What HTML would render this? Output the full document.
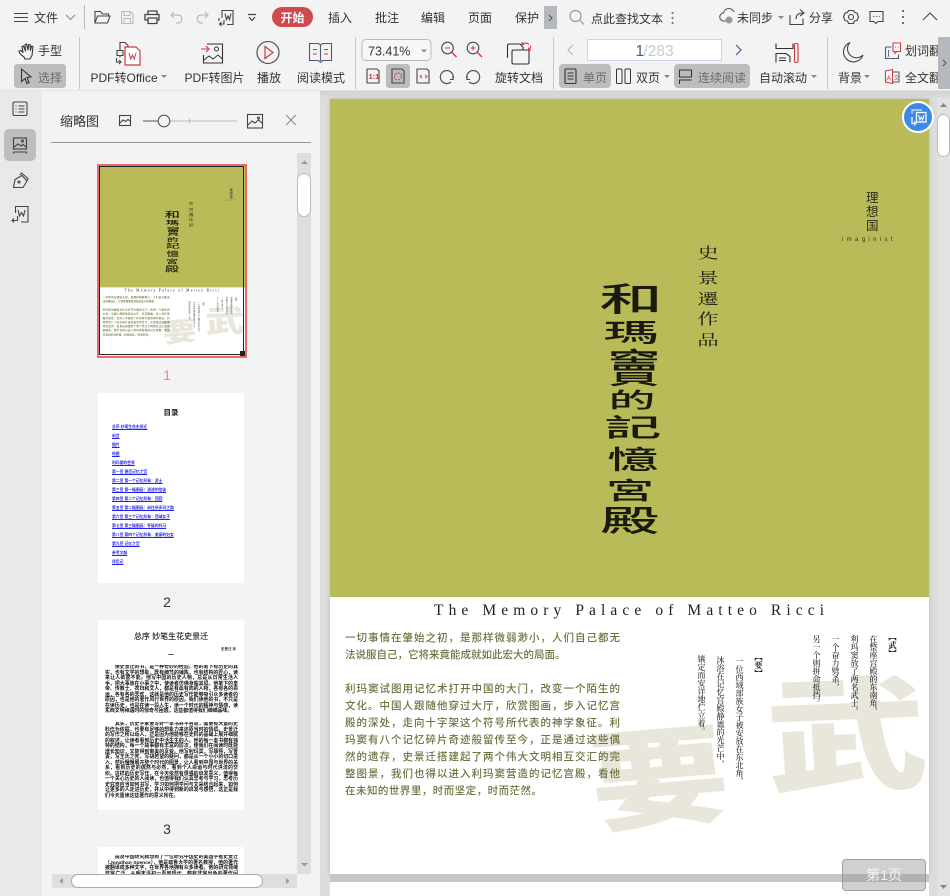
<!DOCTYPE html>
<html lang="zh"><head><meta charset="utf-8"><title>PDF</title>
<style>
html,body{margin:0;padding:0;width:950px;height:896px;overflow:hidden;background:#f3f3f3;font-family:"Liberation Sans","Noto Sans CJK SC",sans-serif}
.a{position:absolute}
#viewer{left:320px;top:91px;width:630px;height:805px;background:#dcdcdc;overflow:hidden}
.page{position:absolute;left:0;top:0;width:599px;height:775px;background:#fff;overflow:hidden}
.olive{position:absolute;left:0;top:0;width:599px;height:498px;background:#b9bb58}
.c{position:absolute;line-height:1;white-space:nowrap;color:#1a1a10}
.big{font-family:"Noto Sans CJK TC",sans-serif;font-weight:500;font-size:60px}
.au{font-family:"Noto Serif CJK TC",serif;font-size:19px;font-weight:400;transform:translate(-50%,-50%) scale(1.12,.78)}
.ln{position:absolute;left:15px;width:275px;height:14px;line-height:14px;font-size:10.5px;color:#6e7240;text-align:justify;text-align-last:justify;white-space:nowrap;filter:blur(.25px);font-weight:500}
.v{position:absolute;writing-mode:vertical-rl;font-family:"Noto Serif CJK SC",serif;font-size:8px;line-height:8px;letter-spacing:0;color:#222;white-space:nowrap;font-weight:500}
.wm{position:absolute;line-height:1;color:#e9e7db;font-family:"Noto Sans CJK SC",sans-serif;font-weight:900}
.th{position:absolute;background:#fff;overflow:hidden}
.toc{position:absolute;left:14px;font-size:3.8px;line-height:5px;color:#2222ee;font-weight:700;text-decoration:underline;white-space:nowrap}
.p3{position:absolute;left:7px;width:133px;font-size:4.9px;line-height:5.5px;color:#111;font-weight:700;text-align:justify;word-break:break-all;overflow:hidden}
.num{position:absolute;width:40px;text-align:center;font-size:14px;line-height:16px;color:#333}
</style></head>
<body>

<!-- viewer -->
<div class="a" id="viewer">
  <div class="a" style="left:0;top:0;width:630px;height:7px;background:linear-gradient(#d3d3d3,#dcdcdc)"></div>
  <div class="page" style="left:10px;top:8px;box-shadow:0 0 4px #bbb">
    <div class="olive"></div>
    <span class="c big" style="left:301px;top:198px;transform:translate(-50%,-50%) scale(1.05,.55)">和</span>
    <span class="c big" style="left:301px;top:232px;transform:translate(-50%,-50%) scale(.92,.42)">瑪</span>
    <span class="c big" style="left:304px;top:267px;transform:translate(-50%,-50%) scale(.88,.66)">竇</span>
    <span class="c big" style="left:302px;top:300px;transform:translate(-50%,-50%) scale(.78,.36)">的</span>
    <span class="c big" style="left:303px;top:327px;transform:translate(-50%,-50%) scale(.95,.42)">記</span>
    <span class="c big" style="left:303px;top:359px;transform:translate(-50%,-50%) scale(.86,.44)">憶</span>
    <span class="c big" style="left:300px;top:390px;transform:translate(-50%,-50%) scale(.8,.4)">宮</span>
    <span class="c big" style="left:300px;top:420px;transform:translate(-50%,-50%) scale(.98,.5)">殿</span>

    <span class="c au" style="left:378px;top:153px">史</span>
    <span class="c au" style="left:378px;top:178px">景</span>
    <span class="c au" style="left:378px;top:199px">遷</span>
    <span class="c au" style="left:378px;top:219px">作</span>
    <span class="c au" style="left:378px;top:240px">品</span>

    <span class="c" style="left:536px;top:93px;font-size:12.5px;color:#2c2c20">理</span>
    <span class="c" style="left:536px;top:107px;font-size:12.5px;color:#2c2c20">想</span>
    <span class="c" style="left:536px;top:121px;font-size:12.5px;color:#2c2c20">国</span>
    <span class="c" style="left:512px;top:138px;font-size:6px;letter-spacing:3.35px;color:#333">imaginist</span>

    <span class="wm" style="left:516px;top:628px;font-size:170px;transform:translate(-50%,-50%) scale(.95,.72) rotate(-3deg)">武</span>
    <span class="wm" style="left:328px;top:672px;font-size:138px;transform:translate(-50%,-50%) scale(1,.78) rotate(-6deg)">要</span>

    <span class="c" style="left:104px;top:504px;font-family:'Liberation Serif',serif;font-size:15.5px;letter-spacing:5.1px;color:#222">The Memory Palace of Matteo Ricci</span>

    <div class="ln" style="top:532px">一切事情在肇始之初，是那样微弱渺小，人们自己都无</div>
    <div class="ln" style="top:549px;width:205px">法说服自己，它将来竟能成就如此宏大的局面。</div>
    <div class="ln" style="top:583px">利玛窦试图用记忆术打开中国的大门，改变一个陌生的</div>
    <div class="ln" style="top:600px">文化。中国人跟随他穿过大厅，欣赏图画，步入记忆宫</div>
    <div class="ln" style="top:617px">殿的深处，走向十字架这个符号所代表的神学象征。利</div>
    <div class="ln" style="top:634px">玛窦有八个记忆碎片奇迹般留传至今，正是通过这些偶</div>
    <div class="ln" style="top:651px">然的遗存，史景迁搭建起了两个伟大文明相互交汇的完</div>
    <div class="ln" style="top:668px">整图景，我们也得以进入利玛窦营造的记忆宫殿，看他</div>
    <div class="ln" style="top:685px;width:197px">在未知的世界里，时而坚定，时而茫然。</div>

    <div class="v" style="left:558px;top:534px;font-weight:700">【武】</div>
    <div class="v" style="left:539px;top:536px">在整座宫殿的东南角，</div>
    <div class="v" style="left:520px;top:536px">利玛窦放了两名武士，</div>
    <div class="v" style="left:501px;top:536px">一个奋力劈杀，</div>
    <div class="v" style="left:482px;top:536px">另一个则拼命抵挡。</div>
    <div class="v" style="left:424px;top:554px;font-weight:700">【要】</div>
    <div class="v" style="left:405px;top:558px">一位西域部族女子被安放在东北角，</div>
    <div class="v" style="left:386px;top:557px">沐浴在记忆宫殿静谧的光芒中，</div>
    <div class="v" style="left:367px;top:556px">镇定而安详地伫立着。</div>
  </div>
  <div class="a" style="left:10px;top:783px;width:599px;height:8px;background:#c6c6c6"></div>
  <div class="a" style="left:10px;top:791px;width:599px;height:20px;background:#fff"></div>
  <!-- main scrollbar -->
  <div class="a" style="left:617px;top:7px;width:13px;height:798px;background:#e2e2e2"></div>
  <div class="a" style="left:617px;top:23px;width:13px;height:43px;box-sizing:border-box;background:#fff;border:1px solid #bbb;border-radius:7px"></div>
</div>
<svg class="a" style="left:937px;top:98px" width="13" height="798"><path d="M3 9l3.5-4 3.5 4z" fill="#888"/><path d="M3 787l3.500 4 3.500-4z" fill="#888"/></svg>

<!-- float buttons -->
<svg class="a" style="left:902px;top:101px" width="32" height="32">
  <circle cx="16" cy="16" r="15" fill="#3f88e6" stroke="#fff" stroke-width="2"/>
  <path d="M10 12.500v-3.500h10" fill="none" stroke="#dbe8fb" stroke-width="1.200"/>
  <rect x="14.500" y="11.500" width="9.500" height="9.500" fill="none" stroke="#fff" stroke-width="1.300"/>
  <path d="M16.500 14l1.500 5 1.300-3 1.300 3 1.500-5" fill="none" stroke="#fff" stroke-width="1"/>
  <path d="M10 16v6.500h4M12 20.500l2 2-2 2" fill="none" stroke="#fff" stroke-width="1.200"/>
</svg>
<div class="a" style="left:842px;top:859px;width:82px;height:30px;background:rgba(150,150,150,.45);border:1px solid rgba(130,130,130,.6);border-radius:4px;color:#f4f4f4;font-size:14px;line-height:30px;text-align:center">第1页</div>

<!-- left rail and panel -->
<div class="a" style="left:0;top:91px;width:42px;height:805px;background:#e9e9e9"></div>
<div class="a" style="left:42px;top:91px;width:278px;height:805px;background:#f3f3f3;overflow:hidden"></div>

<!-- thumb 1 -->
<div class="a" style="left:97px;top:164px;width:146px;height:190px;border:2px solid #e86a6a;overflow:hidden">
  <div class="a" style="left:0;top:0;width:146px;height:190px;overflow:hidden">
    <div class="page" style="transform:scale(.2437);transform-origin:0 0">
      <div class="olive"></div>
      <span class="c big" style="left:301px;top:198px;transform:translate(-50%,-50%) scale(1.05,.55)">和</span>
      <span class="c big" style="left:301px;top:232px;transform:translate(-50%,-50%) scale(.92,.42)">瑪</span>
      <span class="c big" style="left:304px;top:267px;transform:translate(-50%,-50%) scale(.88,.66)">竇</span>
      <span class="c big" style="left:302px;top:300px;transform:translate(-50%,-50%) scale(.78,.36)">的</span>
      <span class="c big" style="left:303px;top:327px;transform:translate(-50%,-50%) scale(.95,.42)">記</span>
      <span class="c big" style="left:303px;top:359px;transform:translate(-50%,-50%) scale(.86,.44)">憶</span>
      <span class="c big" style="left:300px;top:390px;transform:translate(-50%,-50%) scale(.8,.4)">宮</span>
      <span class="c big" style="left:300px;top:420px;transform:translate(-50%,-50%) scale(.98,.5)">殿</span>
      <span class="c au" style="left:378px;top:153px">史</span>
      <span class="c au" style="left:378px;top:178px">景</span>
      <span class="c au" style="left:378px;top:199px">遷</span>
      <span class="c au" style="left:378px;top:219px">作</span>
      <span class="c au" style="left:378px;top:240px">品</span>
      <span class="c" style="left:536px;top:93px;font-size:12.5px;color:#2c2c20">理</span>
      <span class="c" style="left:536px;top:107px;font-size:12.5px;color:#2c2c20">想</span>
      <span class="c" style="left:536px;top:121px;font-size:12.5px;color:#2c2c20">国</span>
      <span class="c" style="left:512px;top:138px;font-size:6px;letter-spacing:3.35px;color:#333">imaginist</span>
      <span class="wm" style="left:516px;top:628px;font-size:170px;transform:translate(-50%,-50%) scale(.95,.72) rotate(-3deg)">武</span>
      <span class="wm" style="left:328px;top:672px;font-size:138px;transform:translate(-50%,-50%) scale(1,.78) rotate(-6deg)">要</span>
      <span class="c" style="left:104px;top:504px;font-family:'Liberation Serif',serif;font-size:15.5px;letter-spacing:5.1px;color:#222">The Memory Palace of Matteo Ricci</span>
      <div class="ln" style="top:532px">一切事情在肇始之初，是那样微弱渺小，人们自己都无</div>
      <div class="ln" style="top:549px;width:205px">法说服自己，它将来竟能成就如此宏大的局面。</div>
      <div class="ln" style="top:583px">利玛窦试图用记忆术打开中国的大门，改变一个陌生的</div>
      <div class="ln" style="top:600px">文化。中国人跟随他穿过大厅，欣赏图画，步入记忆宫</div>
      <div class="ln" style="top:617px">殿的深处，走向十字架这个符号所代表的神学象征。利</div>
      <div class="ln" style="top:634px">玛窦有八个记忆碎片奇迹般留传至今，正是通过这些偶</div>
      <div class="ln" style="top:651px">然的遗存，史景迁搭建起了两个伟大文明相互交汇的完</div>
      <div class="ln" style="top:668px">整图景，我们也得以进入利玛窦营造的记忆宫殿，看他</div>
      <div class="ln" style="top:685px;width:197px">在未知的世界里，时而坚定，时而茫然。</div>
      <div class="v" style="left:558px;top:534px;font-weight:700">【武】</div>
      <div class="v" style="left:539px;top:536px">在整座宫殿的东南角，</div>
      <div class="v" style="left:520px;top:536px">利玛窦放了两名武士，</div>
      <div class="v" style="left:501px;top:536px">一个奋力劈杀，</div>
      <div class="v" style="left:482px;top:536px">另一个则拼命抵挡。</div>
      <div class="v" style="left:424px;top:554px;font-weight:700">【要】</div>
      <div class="v" style="left:405px;top:558px">一位西域部族女子被安放在东北角，</div>
      <div class="v" style="left:386px;top:557px">沐浴在记忆宫殿静谧的光芒中，</div>
      <div class="v" style="left:367px;top:556px">镇定而安详地伫立着。</div>
    </div>
  </div>
  <div class="a" style="left:0;top:0;width:143px;height:187px;border:1.5px solid #222"></div>
  <div class="a" style="right:0;bottom:0;width:5px;height:5px;background:#222"></div>
</div>
<div class="num" style="left:147px;top:367px;color:#e87ab8">1</div>

<!-- thumb 2 -->
<div class="th" style="left:98px;top:393px;width:146px;height:190px">
  <div class="a" style="left:0;width:146px;text-align:center;top:15px;font-size:7.5px;line-height:10px;font-weight:700;color:#222">目录</div>
  <div class="toc" style="top:32px">总序 妙笔生花史景迁</div>
  <div class="toc" style="top:41px">前言</div>
  <div class="toc" style="top:50px">图片</div>
  <div class="toc" style="top:59px">地图</div>
  <div class="toc" style="top:68px">利玛窦的世界</div>
  <div class="toc" style="top:77px">第一章 建造记忆之宫</div>
  <div class="toc" style="top:86px">第二章 第一个记忆形象：武士</div>
  <div class="toc" style="top:95px">第三章 第一幅图画：迷途的信徒</div>
  <div class="toc" style="top:104px">第四章 第二个记忆形象：回回</div>
  <div class="toc" style="top:113px">第五章 第二幅图画：前往所多玛之路</div>
  <div class="toc" style="top:122px">第六章 第三个记忆形象：西域女子</div>
  <div class="toc" style="top:131px">第七章 第三幅图画：怀疑的托马</div>
  <div class="toc" style="top:140px">第八章 第四个记忆形象：美丽的妇女</div>
  <div class="toc" style="top:149px">第九章 记忆之宫</div>
  <div class="toc" style="top:158px">参考文献</div>
  <div class="toc" style="top:167px">译后记</div>
</div>
<div class="num" style="left:147px;top:594px">2</div>

<!-- thumb 3 -->
<div class="th" style="left:98px;top:620px;width:146px;height:190px">
  <div class="a" style="left:0;width:146px;text-align:center;top:12px;font-size:8px;line-height:10px;color:#222;font-weight:500">总序 妙笔生花史景迁</div>
  <div class="a" style="left:123px;top:27px;font-size:3.5px;line-height:5px;color:#333;font-weight:700">史景迁 序</div>
  <div class="a" style="left:0;width:146px;text-align:center;top:32px;font-size:6px;line-height:8px;font-weight:700;color:#222">一</div>
  <div class="p3" style="top:45px;height:55px">　　读史景迁的书，是一种奇妙的经验。他的笔下有历史的真实，也有文学的想象，既有细节的铺陈，也有结构的匠心，读来让人欲罢不能。他写中国的历史人物，总是从日常生活入手，把大事放在小事之中，使读者仿佛身临其境。他笔下的皇帝、传教士、农妇和文人，都是有血有肉的人物，各有各的命运，各有各的悲欢，这就是他的历史写作能够吸引众多读者的原因，也是他的著作风行世界的原因。我们读他的书，不只是在读历史，也是在读一段人生，读一个时代的精神与情感，读东西文明相遇时的惊奇与困惑，这些都值得我们细细品味。</div>
  <div class="p3" style="top:102px;height:83px">　　其实，历史学家要写好一本书并不容易，需要有大量的史料作为依据，也要有足够的想象力来还原当时的情境。史景迁的写作之所以动人，正是因为他能够在史料的基础上展开细腻的叙述，让读者看到历史中活生生的人。他的每一本书都有独特的结构，每一个故事都有丰富的层次，使我们在阅读时既能增长知识，又能得到审美的享受。他写利玛窦，写康熙，写曹寅，写王氏之死，写胡若望的疑问，都是从一个小小的切口进入，然后慢慢展开整个时代的图景，让人看到中国与世界的关系，看到历史的偶然与必然，看到个人命运与时代洪流的交织。这样的历史写作，在今天依然有很强的启发意义，值得每一个关心历史的人阅读，也值得我们认真思考与学习，思考历史究竟应当如何书写，学习如何把学问与文采结合起来，如何让更多的人走进历史，并从中得到新的启发与感悟，这正是我们今天重读这些著作的意义所在。</div>
</div>
<div class="num" style="left:147px;top:821px">3</div>

<!-- thumb 4 -->
<div class="th" style="left:98px;top:847px;width:146px;height:40px">
  <div class="p3" style="top:8px;height:30px">　　提及中国研究就想到了一位研究中国史的美国学者史景迁（Jonathan Spence），他是耶鲁大学的著名教授，他的著作被翻译成多种文字，在世界各地拥有众多读者。他的研究领域非常广泛，从明末清初一直到现代，都有非常出色的著作问世，影响深远。</div>
</div>

<!-- panel chrome + ribbon icons in one SVG -->
<svg class="a" style="left:0;top:0" width="950" height="896" font-family="'Liberation Sans','Noto Sans CJK SC',sans-serif" font-size="12" fill="#333">
  <!-- ribbon bg -->
  <rect x="0" y="0" width="950" height="91" fill="#f3f3f3"/>
  <rect x="0" y="90" width="950" height="1" fill="#e2e2e2"/>
  <g fill="none" stroke="#c9c9c9"><path d="M79.500 37v52M355.500 37v52M553.500 37v52M827.500 37v52"/><path d="M84.500 5v24" stroke="#bbb"/></g>

  <!-- top row -->
  <g fill="none" stroke="#444" stroke-width="1.100">
    <path d="M14 13.500h14M14 17.500h14M14 21.500h14"/>
    <path d="M66 15l4.500 4.500L75 15" stroke="#888"/>
    <path d="M95 23V11.500h5.500l2 2.500h6v2M95 23l2.500-7H110l-2.500 7z"/>
    <path d="M121.500 11.500h9l2.500 2.500v9.500h-11.500zM124 11.500v4h6v-4M124 23.500v-5h6.500v5" stroke="#bbb"/>
    <path d="M148 15v-4h9v4M147.500 20h-2.500v-5.500h14V20h-2.500M148 18h9v5.500h-9z" stroke-width="1.300"/>
    <path d="M174 12l-3 3 3 3M171 15h7c5 0 5 8 0 8h-2" stroke="#bbb" stroke-width="1.200"/>
    <path d="M205 12l3 3-3 3M208 15h-7c-5 0-5 8 0 8h2" stroke="#bbb" stroke-width="1.200"/>
    <path d="M222 18v-7.500h11v14h-6M225 13.500l1.500 6 1.500-3.500 1.500 3.500 1.500-6"/>
    <path d="M224 20v4h-4M221.500 22l-2 2 2 2M219 18v3"/>
    <path d="M248 14.500h8M249 17l3 3.500 3-3.500" stroke-width="1.200"/>
  </g>
  <text x="34" y="22">文件</text>
  <rect x="272" y="7" width="41" height="20" rx="10" fill="#cf4a50"/>
  <text x="280.500" y="22" fill="#fff" font-weight="700">开始</text>
  <text x="328" y="22">插入</text><text x="375" y="22">批注</text><text x="421" y="22">编辑</text><text x="468" y="22">页面</text><text x="515" y="22">保护</text>
  <rect x="544" y="6" width="13" height="23" fill="#b5b8bd"/>
  <path d="M549 15l3 3-3 3" fill="none" stroke="#555"/>
  <circle cx="575.500" cy="16" r="5.500" fill="none" stroke="#999" stroke-width="1.200"/><path d="M580 20.500l4 4" stroke="#999" stroke-width="1.200"/>
  <text x="591" y="23">点此查找文本</text>
  <g fill="#666"><circle cx="672.500" cy="13" r="1"/><circle cx="672.500" cy="18" r="1"/><circle cx="672.500" cy="23" r="1"/></g>
  <path d="M727 21h-3a4 4 0 0 1-.500-8 5.500 5.500 0 0 1 10.500-1" fill="none" stroke="#555" stroke-width="1.100"/>
  <circle cx="729" cy="20" r="3.500" fill="#999"/>
  <text x="737" y="22">未同步</text><path d="M778 16h6l-3 3z" fill="#888"/>
  <path d="M790 15v9.500h13v-6M796 19c0-4 2-6 7-6M800 9.500l4 3.500-4 3" fill="none" stroke="#444" stroke-width="1.100"/>
  <text x="809" y="22">分享</text>
  <path d="M848.500 10.500h5l1 2 2.500.500 1.500 4-1.500 3.500-2.500.500-1 2.500h-5l-1-2.500-2.500-.500-1.500-3.500 1.500-4 2.500-.500z" fill="none" stroke="#444" stroke-width="1.100" stroke-linejoin="round"/><circle cx="851" cy="17" r="2.500" fill="none" stroke="#444" stroke-width="1.100"/>
  <path d="M870 11.500h13v10h-5l-2 2-2-2h-4z" fill="none" stroke="#444" stroke-width="1.100"/><path d="M873 16.500h7" stroke="#777" stroke-dasharray="1.500 1.500"/>
  <g fill="#444"><circle cx="903" cy="11" r="1"/><circle cx="903" cy="17" r="1"/><circle cx="903" cy="23" r="1"/></g>
  <path d="M923 20l7-7 7 7" fill="none" stroke="#444" stroke-width="1.100"/>

  <!-- ribbon: hand / select -->
  <path d="M24 57c-3-2-5-4-5-6l2-.500 2 2-1-6 1.500-.500 2 5-.500-6.500 1.500-.500 1.500 6 .500-5.500 1.500 0 .500 6 1-4.500 1.500.500-1 9-2 3.500h-5z" fill="none" stroke="#333" stroke-width="1.100" stroke-linejoin="round"/>
  <text x="38" y="55">手型</text>
  <rect x="14" y="64" width="52" height="24" rx="3" fill="#bdbdbd"/>
  <path d="M21.500 69l9.500 8-4 .500 2 5-2 1-2-5-3.500 3z" fill="none" stroke="#333" stroke-width="1.100"/>
  <text x="38" y="82" fill="#6b6b6b">选择</text>

  <!-- PDF to Office -->
  <g fill="none" stroke="#444" stroke-width="1.100">
    <path d="M120 51v-8.500h5l3 3v5M117 50.500h6v5h-6zM120 55.500v2M116.500 58v4h4M119 60l2 2-2 2"/>
  </g>
  <path d="M125 47h11l4 4v14h-15z" fill="#fff" stroke="#d0393f" stroke-width="1.200"/>
  <path d="M129 53l1.800 6 1.700-4 1.700 4 1.800-6" fill="none" stroke="#d0393f" stroke-width="1"/>
  <text x="90.500" y="82">PDF转Office</text><path d="M161 75h6l-3 3z" fill="#888"/>

  <!-- PDF to image -->
  <path d="M207 44h15.500v19h-19v-8" fill="none" stroke="#333" stroke-width="1.100"/>
  <circle cx="216.500" cy="49" r="2" fill="none" stroke="#333"/>
  <path d="M204 60l5-4 4 3 5-4 4.500 4" fill="none" stroke="#333"/>
  <path d="M201 49h8M206 46l3 3-3 3" fill="none" stroke="#d0393f" stroke-width="1.100"/>
  <text x="184.500" y="82">PDF转图片</text>

  <!-- Play -->
  <circle cx="268" cy="52.500" r="11" fill="none" stroke="#444" stroke-width="1.100"/>
  <path d="M265 46.500l8 6-8 6z" fill="none" stroke="#d0393f" stroke-width="1.200"/>
  <text x="257" y="82">播放</text>

  <!-- Read mode -->
  <path d="M320.500 45l-2-1.500h-9v17h9l2 2 2-2h9v-17h-9z M320.500 45v16" fill="none" stroke="#4c5a78" stroke-width="1.100"/>
  <path d="M313 49.500h4M313 54h4M324 49.500h4M324 54h4" stroke="#d0393f"/>
  <text x="297" y="82">阅读模式</text>

  <!-- zoom -->
  <rect x="362" y="39.500" width="69" height="21" rx="4" fill="#f7f7f7" stroke="#bbb"/>
  <text x="368" y="55.500" font-size="12.500">73.41%</text><path d="M421 49.500h6l-3 3z" fill="#888"/>
  <circle cx="447.500" cy="48" r="5.800" fill="none" stroke="#444" stroke-width="1.100"/><path d="M445 48h5" stroke="#d0393f"/><path d="M452 52.500l4.500 4.500" stroke="#d0393f" stroke-width="1.300"/>
  <circle cx="473" cy="48" r="5.800" fill="none" stroke="#444" stroke-width="1.100"/><path d="M470.500 48h5M473 45.500v5" stroke="#d0393f"/><path d="M477.500 52.500l4.500 4.500" stroke="#d0393f" stroke-width="1.300"/>

  <path d="M367 69h10l2 2v12h-12z" fill="none" stroke="#444" stroke-width="1.100"/><text x="368.500" y="79" font-size="7.500" fill="#c0353b" font-weight="700">1:1</text>
  <rect x="386" y="64" width="24" height="24" rx="3" fill="#bdbdbd"/>
  <path d="M392 69h10l2 2v12h-12z" fill="none" stroke="#444" stroke-width="1.100"/><circle cx="398" cy="76.500" r="3.500" fill="none" stroke="#d0393f" stroke-dasharray="2 1.200"/>
  <path d="M417 69h10l2 2v12h-12z" fill="none" stroke="#444" stroke-width="1.100"/><path d="M422 75l-2 1.500 2 1.500M425 75l2 1.500-2 1.500" fill="none" stroke="#d0393f"/>
  <path d="M451 82a6.500 6.500 0 1 1 2-3M453 76v3.500h-3" fill="none" stroke="#444" stroke-width="1.100"/>
  <path d="M469 82a6.500 6.500 0 1 0-2-3M467 76v3.500h3" fill="none" stroke="#444" stroke-width="1.100"/>

  <!-- rotate doc -->
  <path d="M507.500 58v-12.500a1.500 1.500 0 0 1 1.500-1.500h11l3 3v3" fill="none" stroke="#333" stroke-width="1.100"/>
  <rect x="512" y="50" width="17" height="14" rx="1.500" fill="#f3f3f3" stroke="#333" stroke-width="1.100"/>
  <path d="M522 44.500c1.500-2 5-2 7 0M522 42v2.500h2.500M530.500 45.500c.5 1.500 0 3-1.500 4M531 50h-2.500v-2.500" fill="none" stroke="#d0393f"/>
  <text x="495" y="82">旋转文档</text>

  <!-- page nav -->
  <path d="M573 45l-5 5 5 5" fill="none" stroke="#bbb" stroke-width="1.200"/>
  <rect x="587.500" y="39.500" width="134" height="21" fill="#fff" stroke="#ccd6e8"/>
  <text x="635.500" y="56" font-size="15.500" fill="#4b5c85">1</text><text x="643.500" y="56" font-size="15.500" fill="#c9c9c9">/283</text>
  <path d="M736 45l5 5-5 5" fill="none" stroke="#4b5c85" stroke-width="1.200"/>
  <rect x="559" y="64" width="52" height="24" rx="4" fill="#bdbdbd"/>
  <rect x="565" y="69" width="11" height="14.500" rx="1" fill="none" stroke="#333" stroke-width="1.100"/><path d="M567.500 73h6M567.500 76h6M567.500 79h6" stroke="#333"/>
  <text x="583" y="82" fill="#6b6b6b">单页</text>
  <rect x="616.500" y="69" width="5.500" height="14.500" rx="1" fill="none" stroke="#333"/><rect x="625" y="69" width="5.500" height="14.500" rx="1" fill="none" stroke="#333"/>
  <text x="636" y="82">双页</text><path d="M664 75h6l-3 3z" fill="#888"/>
  <rect x="674" y="64" width="76" height="24" rx="4" fill="#bdbdbd"/>
  <path d="M679.500 70h12v7h-12zM679.500 84v-4h12" fill="none" stroke="#333" stroke-width="1.100"/>
  <text x="698" y="82" fill="#6b6b6b">连续阅读</text>

  <!-- auto scroll -->
  <path d="M776 43.500v5h17v-5M776 62.500v-9h10l4 3v6M779 58h7M779 60.500h7" fill="none" stroke="#333" stroke-width="1.100"/>
  <rect x="794.500" y="43.500" width="3.500" height="19" rx="1.500" fill="none" stroke="#d0393f" stroke-width="1.100"/>
  <text x="759" y="82">自动滚动</text><path d="M811 75h6l-3 3z" fill="#888"/>

  <!-- bg -->
  <path d="M850 42.500a10 10 0 1 0 13 12.500 9 9 0 0 1-13-12.500z" fill="none" stroke="#444" stroke-width="1.100"/>
  <text x="838" y="82">背景</text><path d="M864 75h6l-3 3z" fill="#888"/>
  <path d="M885.500 47h6M885.500 47v11.500h13v-4" fill="none" stroke="#4c5a78" stroke-width="1.100"/>
  <text x="887" y="56.500" font-size="9" fill="#4c5a78" font-family="'Liberation Serif',serif">I</text>
  <path d="M893 43h7.500v8.500h-3.500l-2 1.800v-1.800h-2z" fill="#fff" stroke="#d0393f" stroke-width="1.100"/><path d="M895 47h1M897.500 47h1" stroke="#d0393f"/>
  <text x="905" y="55">划词翻</text>
  <path d="M885.500 71l7-1.500v14l-7-1.500z" fill="#fff" stroke="#d0393f" stroke-width="1.100"/><text x="886.500" y="80.500" font-size="7" fill="#d0393f">A</text>
  <path d="M892.500 72h6.500v10h-6.500" fill="none" stroke="#4c5a78"/><text x="893.500" y="80" font-size="6" fill="#777">文</text>
  <text x="905" y="82">全文翻</text>
  <rect x="938" y="37" width="12" height="52" fill="#b5b8bd"/>
  <path d="M943 60l3 3-3 3" fill="none" stroke="#555"/>

  <!-- rail icons -->
  <rect x="4" y="129" width="32" height="32" rx="5" fill="#bdbdbd"/>
  <g fill="none" stroke="#444" stroke-width="1.100">
    <rect x="13" y="102" width="14" height="13.500" rx="1.500"/><path d="M15.500 106h1M15.500 109h1M15.500 112h1M18.500 106h6M18.500 109h6M18.500 112h6"/>
    <rect x="13.500" y="138" width="13" height="11"/><circle cx="22.500" cy="141" r="1"/><path d="M14 147l4-3 3 2 2-1.500 3 2.500M13.500 152h13M13.500 152v1.500M26.500 152v1.500"/>
    <path d="M13.500 187.500l1.500-8 7-4 5 5.500-4 6.500zM20 175l1.500-2 6.500 5.500-1 2.500"/><circle cx="19" cy="182" r="1"/>
    <path d="M15.500 213v-6.500h12.500v15.500h-7M18 210l1.500 6 2-3.500 2 3.500 1.500-6M17.500 216v4.500h-5M14 218.500l-2 2 2 2"/>
  </g>

  <!-- panel header -->
  <text x="60" y="126" font-size="13">缩略图</text>
  <g fill="none" stroke="#444" stroke-width="1.100">
    <rect x="119.500" y="115.500" width="11" height="10"/><path d="M120 123l3-3 2.500 1.500 2.500-2 2.500 2"/>
    <rect x="247.500" y="114.500" width="15" height="13.500"/><path d="M248 125l4-4 3 2 3.500-3 4 3.500"/><circle cx="258.500" cy="118" r="1"/>
    <path d="M286 115l10 10M296 115l-10 10" stroke="#888"/>
  </g>
  <path d="M143 121h21" stroke="#555" stroke-width="1.100"/><path d="M164 121h73M189.500 118.500v5" stroke="#bbb"/>
  <circle cx="164" cy="121" r="5.800" fill="#f3f3f3" stroke="#555" stroke-width="1.100"/>
  <rect x="51" y="142" width="260" height="1" fill="#999"/>

  <!-- panel scrollbars -->
  <rect x="297" y="153" width="14" height="721" fill="#dedede"/>
  <path d="M301 164l3.500-3.500 3.500 3.500z" fill="#999"/><path d="M301 863l3.500 3.500 3.500-3.500z" fill="#999"/>
  <rect x="297.500" y="173.500" width="13" height="43" rx="6.500" fill="#fff" stroke="#bbb"/>
  <rect x="52" y="874" width="245" height="14" fill="#dedede"/>
  <path d="M63 878v6l-3.500-3z" fill="#999"/><path d="M286 878v6l3.500-3z" fill="#999"/>
  <rect x="71.500" y="874.500" width="191" height="13" rx="6.500" fill="#fff" stroke="#aaa"/>
</svg>
</body></html>
